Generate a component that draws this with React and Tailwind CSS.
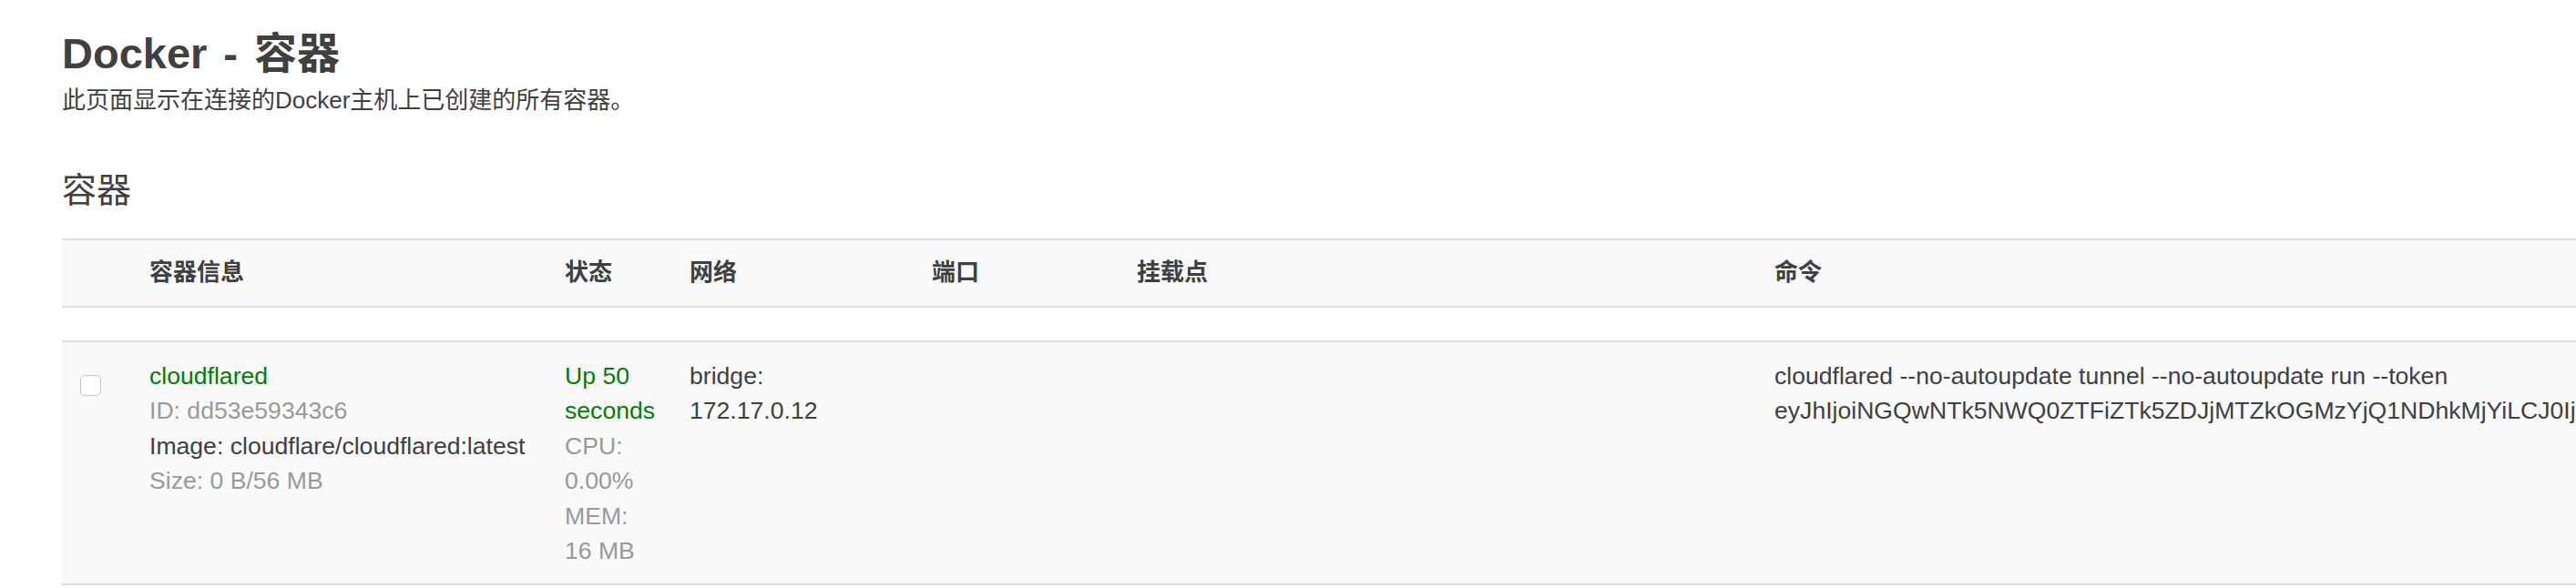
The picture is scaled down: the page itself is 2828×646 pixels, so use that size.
import React from "react";

const token =
  "eyJhIjoiNGQwNTk5NWQ0ZTFiZTk5ZDJjMTZkOGMzYjQ1NDhkMjYiLCJ0IjoiYjE2ZjYxNzUtNTFiOC00ZDk0LWE2NmMtMTQ1ZDQ5NmJkZjQ5IiwicyI6Ik1qZzBPVEF5TWpndE5qUTNZaTAwWXpJMExXRTRPR1V0WkdZek9HWmpNR1l4T0dVeSJ9";

export default function App() {
  return (
    <div className="w-[2828px] h-[646px] overflow-hidden bg-white text-[#404040] font-['Liberation_Sans','Noto_Sans_CJK_SC',sans-serif]">
      <div className="pl-[68px] pt-[33px]">
        <h1 className="text-[47px] leading-[52px] font-bold">
          <span>Docker</span>
          <span className="mx-[18px]">-</span>
          <span>容器</span>
        </h1>
        <p className="mt-[6px] text-[26px] leading-[38.5px]">
          此页面显示在连接的Docker主机上已创建的所有容器。
        </p>
        <h2 className="mt-[58px] text-[38px] leading-[42px] font-normal">容器</h2>

        <div className="mt-[32px] w-[3400px] text-[26px] leading-[38.5px]">
          {/* header */}
          <div className="flex items-center h-[76px] border-y-2 border-[#dddddd] bg-[#f9f9f9] font-bold pl-[20px]">
            <div className="w-[76px] shrink-0"></div>
            <div className="w-[456px] shrink-0">容器信息</div>
            <div className="w-[137px] shrink-0">状态</div>
            <div className="w-[266px] shrink-0">网络</div>
            <div className="w-[225px] shrink-0">端口</div>
            <div className="w-[700px] shrink-0">挂载点</div>
            <div className="flex-1">命令</div>
          </div>
          {/* spacer */}
          <div className="h-[36px] bg-white"></div>
          {/* data row */}
          <div className="flex items-start border-y-2 border-[#dddddd] bg-[#f9f9f9] pl-[20px] pt-[18px] pb-[16px] text-[26.6px]">
            <div className="w-[76px] shrink-0 pt-[18px]">
              <div className="w-[23px] h-[23px] rounded-[5px] border border-[#c4c4c4] bg-white"></div>
            </div>
            <div className="w-[456px] shrink-0">
              <div className="text-[#008000]">cloudflared</div>
              <div className="text-[#999999]">ID: dd53e59343c6</div>
              <div className="whitespace-nowrap">Image: cloudflare/cloudflared:latest</div>
              <div className="text-[#999999]">Size: 0 B/56 MB</div>
            </div>
            <div className="w-[137px] shrink-0">
              <div className="text-[#008000]">Up 50</div>
              <div className="text-[#008000]">seconds</div>
              <div className="text-[#999999]">CPU:</div>
              <div className="text-[#999999]">0.00%</div>
              <div className="text-[#999999]">MEM:</div>
              <div className="text-[#999999]">16 MB</div>
            </div>
            <div className="w-[266px] shrink-0">
              <div>bridge:</div>
              <div>172.17.0.12</div>
            </div>
            <div className="w-[225px] shrink-0"></div>
            <div className="w-[700px] shrink-0"></div>
            <div className="flex-1 min-w-0">
              <div className="whitespace-nowrap">
                cloudflared --no-autoupdate tunnel --no-autoupdate run --token
              </div>
              <div className="whitespace-nowrap">{token}</div>
            </div>
          </div>
        </div>
      </div>
    </div>
  );
}
